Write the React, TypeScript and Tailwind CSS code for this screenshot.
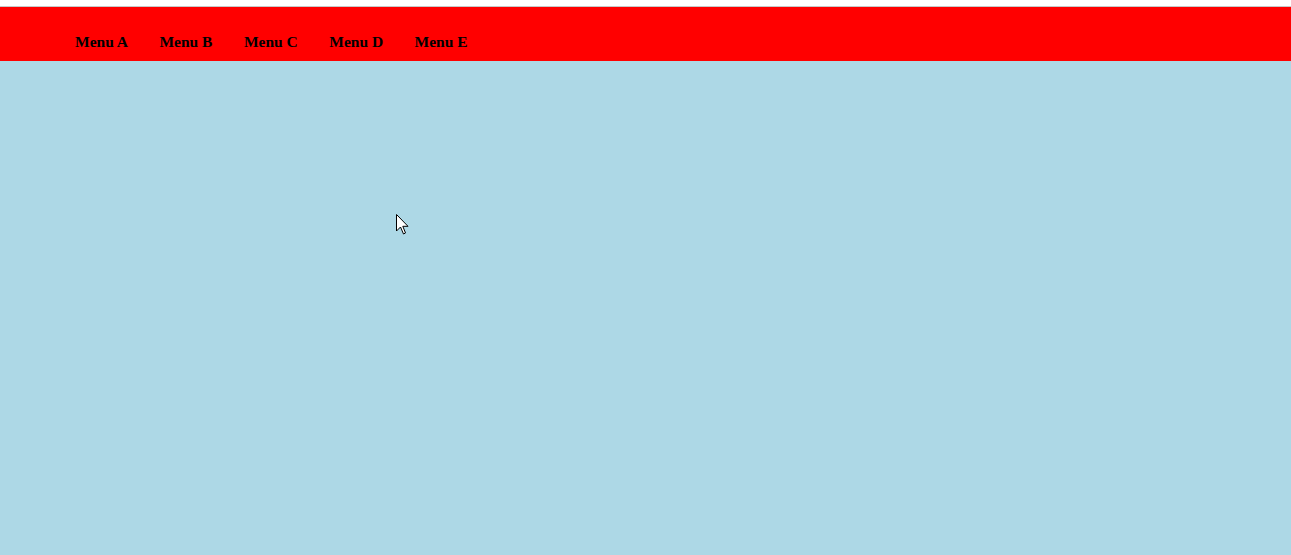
import React from "react";

export default function App() {
  const items = ["Menu A", "Menu B", "Menu C", "Menu D", "Menu E"];
  return (
    <div className="relative w-[1291px] h-[555px] bg-[#add8e6] overflow-hidden" style={{ fontFamily: '"Liberation Serif", "Times New Roman", serif' }}>
      <div className="h-[6px] bg-white" />
      <div className="h-px bg-[#c8c8c8]" />
      <nav className="h-[54px] bg-[#ff0000] pt-[26px] pl-[75px]">
        <ul className="flex gap-[31.5px] text-[15.5px] leading-[17px] font-bold text-black">
          {items.map((m) => (
            <li key={m}>{m}</li>
          ))}
        </ul>
      </nav>
      <svg className="absolute left-[396px] top-[214px]" width="13" height="21" viewBox="0 0 13 21">
        <path d="M0.5 0.5 L0.5 17 L4.5 13 L7.5 20 L9.5 19 L6.8 12.3 L12 12.3 Z" fill="#fff" stroke="#000" strokeWidth="1" strokeLinejoin="miter" />
      </svg>
    </div>
  );
}
